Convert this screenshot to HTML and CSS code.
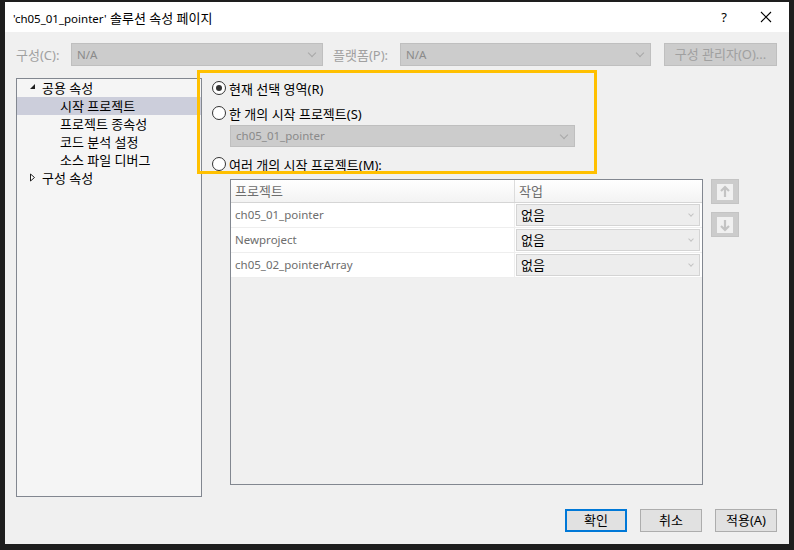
FILE: index.html
```html
<!DOCTYPE html>
<html>

<head lang="ko">
    <meta charset="UTF-8">
    <title>솔루션 속성 페이지</title>
    <link rel="stylesheet" href="styles.css">
</head>

<body>
    <div class="dialog">
        <!-- 제목 표시줄 -->
        <div class="title-bar">
            <span class="title-text"><span class="en">'ch05_01_pointer'</span> 솔루션 속성 페이지</span>
            <span class="title-help">?</span>
            <span class="title-close">
                <svg width="12" height="12" viewBox="0 0 12 12"><path d="M1 1L11 11M11 1L1 11" stroke="#000" stroke-width="1.1" fill="none"/></svg>
            </span>
        </div>

        <div class="config-row">
            <label class="config-label">구성(C):</label>
            <div class="combo combo-config en">N/A<span class="chev"></span></div>
            <label class="config-label label-platform">플랫폼(P):</label>
            <div class="combo combo-platform en">N/A<span class="chev"></span></div>
            <div class="btn-manager">구성 관리자(O)...</div>
        </div>

        <div class="main">
            <div class="tree">
                <div class="tree-item">
                    <svg class="tree-arrow" width="8" height="8" viewBox="0 0 8 8"><path d="M6 1V6H1Z" fill="#1e1e1e"/></svg>
                    공용 속성
                </div>
                <div class="tree-item child selected">시작 프로젝트</div>
                <div class="tree-item child">프로젝트 종속성</div>
                <div class="tree-item child">코드 분석 설정</div>
                <div class="tree-item child">소스 파일 디버그</div>
                <div class="tree-item">
                    <svg class="tree-arrow" width="8" height="9" viewBox="0 0 8 9"><path d="M1.5 1V8L5.5 4.5Z" stroke="#1e1e1e" fill="#fff"/></svg>
                    구성 속성
                </div>
            </div>

            <div class="panel">
                <div class="radio-row">
                    <span class="radio checked"></span>현재 선택 영역(R)
                </div>
                <div class="radio-row row-single">
                    <span class="radio"></span>한 개의 시작 프로젝트(S)
                </div>
                <div class="combo combo-project en">ch05_01_pointer<span class="chev"></span></div>
                <div class="radio-row row-multi">
                    <span class="radio"></span>여러 개의 시작 프로젝트(M):
                </div>

                <div class="grid-wrap">
                    <div class="grid">
                        <div class="grid-head">
                            <div class="col-name">프로젝트</div>
                            <div class="col-action">작업</div>
                        </div>
                        <div class="grid-row">
                            <div class="col-name en">ch05_01_pointer</div>
                            <div class="col-action"><div class="cell-combo">없음<span class="chev small"></span></div></div>
                        </div>
                        <div class="grid-row">
                            <div class="col-name en">Newproject</div>
                            <div class="col-action"><div class="cell-combo">없음<span class="chev small"></span></div></div>
                        </div>
                        <div class="grid-row">
                            <div class="col-name en">ch05_02_pointerArray</div>
                            <div class="col-action"><div class="cell-combo">없음<span class="chev small"></span></div></div>
                        </div>
                    </div>
                    <div class="move-btns">
                        <div class="move-btn">
                            <span class="move-inner">
                                <svg width="12" height="14" viewBox="0 0 12 14"><path d="M6 2V12M2 6L6 2L10 6" stroke="#c3c3c3" stroke-width="2.2" fill="none"/></svg>
                            </span>
                        </div>
                        <div class="move-btn">
                            <span class="move-inner">
                                <svg width="12" height="14" viewBox="0 0 12 14"><path d="M6 2V12M2 8L6 12L10 8" stroke="#c3c3c3" stroke-width="2.2" fill="none"/></svg>
                            </span>
                        </div>
                    </div>
                </div>
            </div>
        </div>

        <div class="button-row">
            <div class="btn btn-default">확인</div>
            <div class="btn">취소</div>
            <div class="btn">적용(A)</div>
        </div>

        <!-- 강조 표시 -->
        <div class="highlight"></div>
    </div>
</body>

</html>
```

FILE: styles.css
```css
body {
    margin: 0;
    background: #1e1e1e;
    font-family: "Noto Sans", "Noto Sans CJK KR", sans-serif;
    font-size: 13px;
    color: #000000;
}

/* 영문만 있는 곳은 조금 작게 */
.en {
    font-size: 11.5px;
}

.dialog {
    position: relative;
    display: flex;
    flex-direction: column;
    width: 784px;
    height: 542px;
    margin: 2px 0px 0px 5px;
    background: #f0f0f0;
}

.title-bar {
    display: flex;
    align-items: center;
    height: 30px;
    background: #ffffff;
    padding-left: 8px;
}

.title-text {
    flex: 1;
}

.title-help {
    width: 20px;
    margin-right: 26px;
    font-size: 13px;
    text-align: center;
}

.title-close {
    display: flex;
    margin-right: 17px;
}

.config-row {
    display: flex;
    align-items: center;
    height: 23px;
    margin-top: 11px;
    padding-left: 11px;
}

.config-label {
    width: 55px;
    color: #a0a0a0;
}

.label-platform {
    width: 67px;
    margin-left: 10px;
}

.combo {
    position: relative;
    box-sizing: border-box;
    height: 23px;
    line-height: 21px;
    padding-left: 5px;
    background: #cccccc;
    border: 1px solid #bfbfbf;
    color: #8a8a8a;
}

.combo-config {
    width: 252px;
}

.combo-platform {
    width: 251px;
}

.chev {
    position: absolute;
    right: 7px;
    top: 6px;
    width: 5px;
    height: 5px;
    border-right: 1px solid #a8a8a8;
    border-bottom: 1px solid #a8a8a8;
    transform: rotate(45deg);
}

.chev.small {
    right: 6px;
    top: 7px;
    width: 3px;
    height: 3px;
    border-color: #c4c4c4;
}

.btn-manager {
    box-sizing: border-box;
    width: 113px;
    height: 23px;
    line-height: 21px;
    margin-left: 13px;
    text-align: center;
    background: #cccccc;
    border: 1px solid #bfbfbf;
    color: #a0a0a0;
}

.main {
    display: flex;
    margin-top: 12px;
    padding-left: 11px;
}

.tree {
    box-sizing: border-box;
    width: 186px;
    height: 419px;
    background: #f5f5f5;
    border: 1px solid #828790;
}

.tree-item {
    box-sizing: border-box;
    display: flex;
    align-items: center;
    height: 18px;
    padding: 0px 0px 2px 12px;
}

.tree-arrow {
    margin-right: 5px;
}

.tree-item.child {
    padding-left: 43px;
}

.tree-item.selected {
    background: #cccedb;
}

.panel {
    margin-left: 10px;
}

.radio-row {
    display: flex;
    align-items: center;
    height: 20px;
}

.row-single {
    margin-top: 5px;
}

.row-multi {
    margin-top: 7px;
}

.radio {
    box-sizing: border-box;
    width: 14px;
    height: 14px;
    margin-right: 3px;
    border: 1px solid #333333;
    border-radius: 50%;
    background: #ffffff;
    position: relative;
}

.radio.checked::after {
    content: "";
    position: absolute;
    left: 3px;
    top: 3px;
    width: 6px;
    height: 6px;
    border-radius: 50%;
    background: #333333;
}

.combo-project {
    width: 345px;
    height: 22px;
    line-height: 20px;
    margin: 2px 0px 0px 18px;
}

.grid-wrap {
    display: flex;
    margin-top: 5px;
    margin-left: 18px;
}

.grid {
    box-sizing: border-box;
    width: 473px;
    height: 306px;
    background: #f0f0f0;
    border: 1px solid #828790;
}

.grid-head,
.grid-row {
    display: flex;
}

.grid-head {
    height: 22px;
    line-height: 22px;
    background: linear-gradient(#ffffff, #f3f3f3);
    border-bottom: 1px solid #d5d5d5;
    color: #6d6d6d;
}

.grid-row {
    height: 25px;
    line-height: 24px;
    background: #ffffff;
    color: #6d6d6d;
}

.col-name {
    box-sizing: border-box;
    width: 284px;
    padding-left: 4px;
    border-right: 1px solid #eeeeee;
    border-bottom: 1px solid #eeeeee;
}

.grid-head .col-name {
    border-bottom: none;
    border-right-color: #dcdcdc;
}

.col-action {
    box-sizing: border-box;
    flex: 1;
    padding: 1px 2px 1px 1px;
    border-bottom: 1px solid #eeeeee;
}

.grid-head .col-action {
    padding: 0px 0px 0px 4px;
    border-bottom: none;
}

.cell-combo {
    position: relative;
    box-sizing: border-box;
    height: 22px;
    line-height: 20px;
    padding-left: 4px;
    background: #ededed;
    border: 1px solid #d4d4d4;
    color: #000000;
}

.move-btns {
    margin-left: 8px;
}

.move-btn {
    box-sizing: border-box;
    display: flex;
    align-items: center;
    justify-content: center;
    width: 28px;
    height: 25px;
    margin-bottom: 8px;
    background: #cccccc;
    border: 1px solid #c4c4c4;
}

.move-inner {
    display: flex;
    align-items: center;
    justify-content: center;
    width: 16px;
    height: 16px;
    background: #f0f0f0;
}

.button-row {
    display: flex;
    justify-content: flex-end;
    gap: 13px;
    margin-top: auto;
    padding: 0px 12px 12px 0px;
}

.btn {
    box-sizing: border-box;
    width: 62px;
    height: 23px;
    line-height: 21px;
    text-align: center;
    background: #e1e1e1;
    border: 1px solid #adadad;
}

.btn-default {
    border: 2px solid #0078d7;
    line-height: 19px;
}

.highlight {
    position: absolute;
    left: 192px;
    top: 68px;
    width: 394px;
    height: 98px;
    border: 3px solid #ffc000;
}
```
